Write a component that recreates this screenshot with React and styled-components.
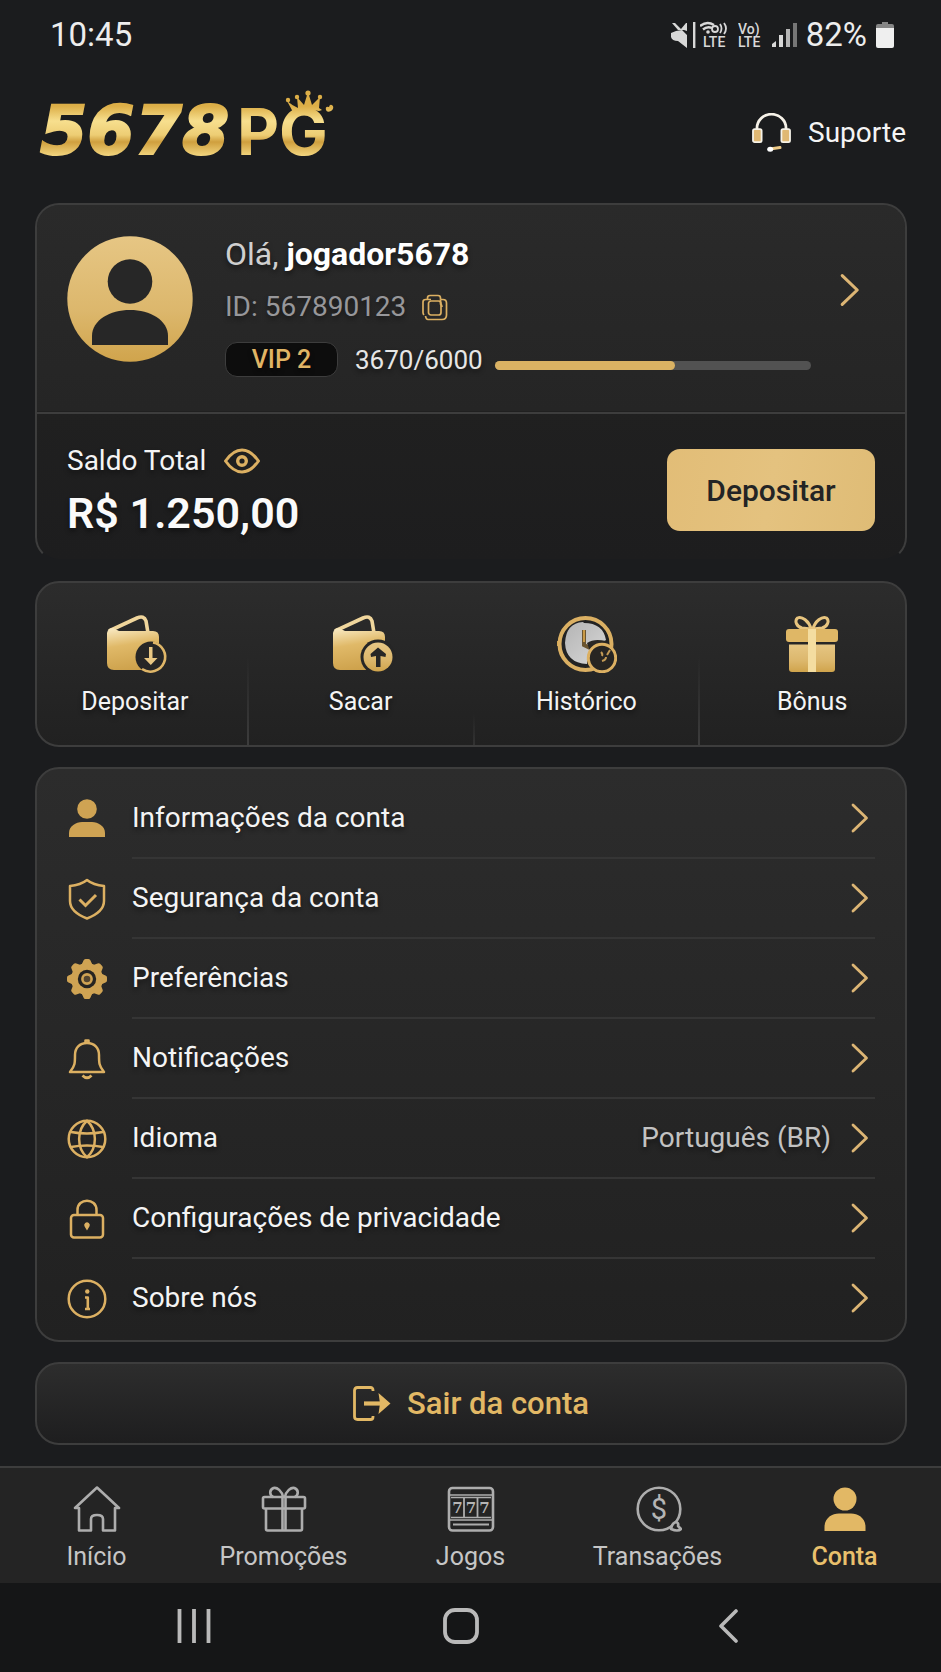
import React, { useState } from 'react';
import styled, { createGlobalStyle } from 'styled-components';

const GlobalStyle = createGlobalStyle`
  * {
    box-sizing: border-box;
  }
  body {
    margin: 0;
    background: #1b1c1e;
    color: #f4f4f4;
    font-family: Roboto, 'Liberation Sans', sans-serif;
  }
  button {
    font-family: inherit;
    color: inherit;
    cursor: pointer;
  }
  a {
    color: inherit;
    text-decoration: none;
  }
  svg {
    display: block;
    flex-shrink: 0;
  }
`;

const GOLD = '#dcb062';
const LINE = '#3d3d3d';

const Page = styled.div`
  display: flex;
  flex-direction: column;
  min-height: 100vh;
`;

const StatusBar = styled.div`
  display: flex;
  align-items: center;
  justify-content: space-between;
  height: 70px;
  padding: 0 47px 0 50px;
  font-size: 33px;
  line-height: 40px;
  color: #ededed;
`;

const StatusIcons = styled.div`
  display: flex;
  align-items: center;
  gap: 9px;
`;

const SoundIcons = styled.div`
  display: flex;
  align-items: center;
  gap: 4px;
`;

const Header = styled.header`
  display: flex;
  align-items: center;
  justify-content: space-between;
  padding: 18px 35px 25px 36px;
`;

const SupportLink = styled.a`
  display: flex;
  align-items: center;
  gap: 17px;
  font-size: 28px;
  line-height: 36px;
`;

const Main = styled.main`
  display: flex;
  flex-direction: column;
  gap: 20px;
  padding: 0 34px 21px 35px;
`;

const Card = styled.section`
  border: 2px solid ${LINE};
  border-radius: 24px;
  background: linear-gradient(#2c2c2c, #212121);
  text-shadow: 0 3px 5px rgba(0, 0, 0, 0.45);
  overflow: hidden;
`;

const AccountCard = styled(Card)`
  border-bottom-color: transparent;
  background: linear-gradient(#2a2a2a, #252525 206px, #202020 206px, #1d1d1e) padding-box;
`;

const Profile = styled.div`
  display: flex;
  align-items: flex-start;
  padding: 31px 30px 35px;
`;

const ProfileInfo = styled.div`
  flex: 1;
  display: flex;
  flex-direction: column;
  gap: 17px;
  margin-left: 32px;
`;

const Greeting = styled.div`
  font-size: 32px;
  line-height: 36px;
  color: #cfcfcf;

  strong {
    color: #fff;
  }
`;

const PlayerId = styled.div`
  display: flex;
  align-items: center;
  gap: 16px;
  font-size: 28px;
  line-height: 36px;
  color: #97979a;
`;

const IconButton = styled.button`
  padding: 0;
  border: 0;
  background: none;
`;

const VipRow = styled.div`
  display: flex;
  align-items: center;
  font-size: 25px;
  line-height: 34px;
`;

const VipBadge = styled.span`
  width: 113px;
  border: 1px solid ${LINE};
  border-radius: 12px;
  background: #0d0d0d;
  color: #e0b565;
  font-weight: 500;
  line-height: 33px;
  text-align: center;
`;

const VipPoints = styled.span`
  margin: 0 12px 0 17px;
  font-size: 26px;
  color: #e6e6e6;
`;

const Track = styled.div`
  flex: 1;
  align-self: flex-end;
  height: 9px;
  margin-bottom: 7px;
  border-radius: 5px;
  background: #525252;
`;

const Fill = styled.div`
  height: 100%;
  border-radius: 5px;
  background: #dab263;
`;

const ProfileLink = styled.a`
  display: flex;
  align-items: center;
  justify-content: center;
  width: 50px;
  height: 108px;
  margin-left: 14px;
`;

const Balance = styled.div`
  display: flex;
  align-items: center;
  justify-content: space-between;
  padding: 29px 30px 22px;
  border-top: 2px solid ${LINE};
`;

const BalanceText = styled.div`
  display: flex;
  flex-direction: column;
  gap: 10px;
`;

const BalanceLabel = styled.div`
  display: flex;
  align-items: center;
  gap: 18px;
  font-size: 28px;
  line-height: 36px;
`;

const Amount = styled.div`
  font-size: 43px;
  line-height: 48px;
  font-weight: 600;
  color: #fafafa;
`;

const DepositButton = styled.button`
  width: 208px;
  height: 82px;
  border: 0;
  border-radius: 13px;
  background: linear-gradient(100deg, #e2bd77, #e4c27f 50%, #dfbc76);
  color: #232425;
  font-size: 30px;
  font-weight: 500;
`;

// the columns run a little past the card, so the outer labels sit near its sides
const Actions = styled.div`
  display: grid;
  grid-template-columns: repeat(4, 1fr);
  margin: 0 -21px 0 -14px;
`;

const Action = styled.button`
  display: flex;
  flex-direction: column;
  align-items: center;
  gap: 14px;
  padding: 32px 0 28px;
  border: 0;
  border-right: 2px solid;
  border-image: linear-gradient(transparent 45%, ${LINE}) 1;
  background: none;
  font-size: 25px;
  line-height: 30px;
  text-shadow: inherit;

  &:nth-child(2) {
    border-image: linear-gradient(transparent 80%, #333) 1;
  }

  &:last-child {
    border-right-color: transparent;
    border-image: none;
  }
`;

const Menu = styled(Card)`
  display: flex;
  flex-direction: column;
  padding: 10px 30px 1px;
`;

const MenuRow = styled.a`
  display: flex;
  align-items: center;
  gap: 25px;
  height: 80px;
  font-size: 28px;
  line-height: 36px;
`;

const MenuBody = styled.span`
  flex: 1;
  align-self: stretch;
  display: flex;
  align-items: center;
  gap: 20px;
  padding-right: 6px;
  border-bottom: 2px solid #353535;

  ${MenuRow}:last-child & {
    border-bottom-color: transparent;
  }
`;

const MenuLabel = styled.span`
  flex: 1;
`;

const MenuValue = styled.span`
  color: #c2c2c2;
`;

const LogoutButton = styled.button`
  display: flex;
  align-items: center;
  justify-content: center;
  gap: 16px;
  height: 83px;
  border: 2px solid ${LINE};
  border-radius: 24px;
  background: linear-gradient(#2d2d2d, #1e1e1f);
  color: #e2b865;
  font-size: 31px;
  font-weight: 500;
`;

const TabBar = styled.nav`
  display: grid;
  grid-template-columns: repeat(5, 1fr);
  height: 117px;
  padding: 18px 3px 0;
  border-top: 2px solid ${LINE};
  background: #242424;
`;

const Tab = styled.a`
  display: flex;
  flex-direction: column;
  align-items: center;
  gap: 10px;
  font-size: 25px;
  line-height: 30px;
  font-weight: ${(props) => (props.$active ? 500 : 400)};
  color: ${(props) => (props.$active ? '#e9c06c' : '#c6c6c6')};
`;

const SystemBar = styled.div`
  flex: 1;
  display: grid;
  grid-template-columns: repeat(3, 1fr);
  place-items: center;
  min-height: 89px;
  padding: 0 80px 4px 61px;
  background: #151617;
`;

const HiddenSvg = styled.svg`
  position: absolute;
`;

const GoldDefs = () => (
  <HiddenSvg width="0" height="0" aria-hidden="true">
    <defs>
      <linearGradient id="gold" x1="0" y1="0" x2="0" y2="1">
        <stop offset="0" stopColor="#e6c684" />
        <stop offset="0.6" stopColor="#dcb76c" />
        <stop offset="1" stopColor="#d0a44c" />
      </linearGradient>
      <linearGradient id="wallet" x1="0.3" y1="0" x2="0.5" y2="1">
        <stop offset="0" stopColor="#f7e6bb" />
        <stop offset="0.4" stopColor="#e0b968" />
        <stop offset="1" stopColor="#cda14b" />
      </linearGradient>
      <linearGradient id="metal" gradientUnits="userSpaceOnUse" x1="0" y1="18" x2="0" y2="68">
        <stop offset="0" stopColor="#dcae47" />
        <stop offset="0.3" stopColor="#f7df8e" />
        <stop offset="0.58" stopColor="#edcd74" />
        <stop offset="0.72" stopColor="#cf9f3e" />
        <stop offset="1" stopColor="#f3d67f" />
      </linearGradient>
      <linearGradient id="silver" x1="0" y1="0" x2="1" y2="1">
        <stop offset="0" stopColor="#b4b4b4" />
        <stop offset="1" stopColor="#d8d8d8" />
      </linearGradient>
    </defs>
  </HiddenSvg>
);

const Logo = () => (
  <svg width="300" height="90" viewBox="0 0 300 90" role="img" aria-label="5678PG">
    <g fill="url(#metal)">
      <text
        x="4"
        y="66"
        fontFamily="'DejaVu Sans', sans-serif"
        fontSize="68"
        fontWeight="700"
        fontStyle="italic"
        stroke="url(#metal)"
        strokeWidth="2"
      >
        5678
      </text>
      <text x="201" y="67" fontFamily="Inter, sans-serif" fontSize="65" fontWeight="700">
        PG
      </text>
      <path d="M257 24 L251 13 Q257 18 262 20 L261 9 L268 17 L272 4 L276 17 L284 9 L283 20 L286 22 L283 23 Q270 20 257 24Z" />
      <circle cx="252" cy="12" r="2.2" />
      <circle cx="261" cy="9" r="2.2" />
      <circle cx="272" cy="5" r="2.6" />
      <circle cx="284" cy="9" r="2.2" />
      <path d="M290 22 Q289 18 293 19 Q294 15 297 18 Q298 21 295 23 Q291 25 290 22Z" />
    </g>
  </svg>
);

const Headset = () => (
  <svg width="39" height="40" viewBox="0 0 39 40" fill="none">
    <path d="M5 17 V15 A14.2 13.5 0 0 1 34 15 V17" stroke="#f6f2e8" strokeWidth="2.8" />
    <rect x="1" y="16.2" width="8.6" height="13" rx="1.6" fill="#e0b873" stroke="#f6f2e8" strokeWidth="1.8" />
    <rect x="29.4" y="16.2" width="8.6" height="13" rx="1.6" fill="#e0b873" stroke="#f6f2e8" strokeWidth="1.8" />
    <path d="M18 36 L28 34.6" stroke="#ecc987" strokeWidth="3" strokeLinecap="round" />
    <ellipse cx="18.2" cy="36.2" rx="3" ry="2.5" fill="#fff" />
  </svg>
);

const Mute = () => (
  <svg width="25" height="26" viewBox="0 0 25 26" fill="#d8d8d8">
    <path d="M0 11 L5 9 L11 8 L16 13 V26 L7 19 Q1 19 0 15Z" />
    <path d="M1 1 L4 1 L10 7 L15 1 H16 V9 L13 8 L7 8Z" />
    <rect x="22" y="0" width="2.4" height="26" />
  </svg>
);

const WifiLte = () => (
  <svg width="29" height="36" viewBox="0 -5 29 36" fill="none" stroke="#d8d8d8" strokeWidth="1.8">
    <path d="M0 4 Q7 -1.5 14 3 M3 7.5 Q7 4 12 6" strokeWidth="2.4" />
    <circle cx="15" cy="7" r="3" />
    <path d="M20 2 Q23 6.5 20 11 M24 1 Q28 6.5 24 12" />
    <circle cx="8" cy="10" r="1.8" fill="#d8d8d8" stroke="none" />
    <text x="3" y="25" fontSize="14" fontWeight="500" fill="#d8d8d8" stroke="none">
      LTE
    </text>
  </svg>
);

const VoLte = () => (
  <svg width="25" height="36" viewBox="0 -5 25 36" fill="#d8d8d8" fontSize="14" fontWeight="500">
    <text x="0" y="12">
      Vo)
    </text>
    <text x="0" y="25">
      LTE
    </text>
  </svg>
);

const Signal = () => (
  <svg width="25" height="26" viewBox="0 0 25 26" fill="#d8d8d8">
    <path d="M0 25 V22 L4 19 V25Z" />
    <rect x="7" y="13" width="4" height="12" />
    <rect x="14" y="7" width="4" height="18" fill="#b5b5b5" />
    <rect x="21" y="1" width="4" height="24" fill="#767676" />
  </svg>
);

const Battery = () => (
  <svg width="18" height="26" viewBox="0 0 18 26">
    <path d="M6 0 H12 V2 H16 Q18 2 18 4 V7 H0 V4 Q0 2 2 2 H6Z" fill="#858585" />
    <path d="M0 6 H18 V24 Q18 26 16 26 H2 Q0 26 0 24Z" fill="#efefef" />
  </svg>
);

const Avatar = () => (
  <svg width="126" height="126" viewBox="0 0 126 126" role="img" aria-label="Avatar">
    <circle cx="63" cy="63" r="62.7" fill="url(#gold)" />
    <circle cx="63" cy="45.5" r="22.3" fill="#272727" />
    <path d="M25 109 V100 C25 84 43 74 63 74 C83 74 101 84 101 100 V109Z" fill="#272727" />
  </svg>
);

const Copy = () => (
  <svg width="26" height="27" viewBox="0 0 26 27" fill="none" stroke={GOLD} strokeWidth="1.7">
    <path d="M5.5 5.5 V4 Q5.5 1.5 8 1.5 H16 Q18.5 1.5 18.5 4 V5.5" />
    <path d="M2 21 Q1 20 1 18.5 V8 Q1 5.5 3.5 5.5 H9 M18.5 5.5 H21 Q24.5 5.5 24.5 9 V21 Q24.5 25.5 20 25.5 H6 Q4 25.5 3.5 22" />
    <rect x="6.5" y="7" width="12.5" height="14" rx="2.5" />
    <path d="M18.5 5.5 V10 Q20 11 20 13" />
  </svg>
);

const Eye = () => (
  <svg width="36" height="26" viewBox="0 0 36 26" fill="none" stroke={GOLD}>
    <path
      d="M1.5 13 C5 8 11 2 18 2 C25 2 31 8 34.5 13 C31 18 25 24 18 24 C11 24 5 18 1.5 13Z"
      strokeWidth="3"
      strokeLinejoin="round"
    />
    <circle cx="18" cy="13" r="4.3" strokeWidth="3.4" />
  </svg>
);

const Chevron = ({ size = 30 }) => (
  <svg
    width={Math.round(size * 0.6)}
    height={size}
    viewBox="0 0 18 30"
    fill="none"
    stroke="#dcb574"
    strokeWidth="2.8"
    strokeLinecap="round"
    strokeLinejoin="round"
  >
    <path d="M2 2 L15.5 15 L2 28" />
  </svg>
);

const Wallet = () => (
  <>
    <path d="M2 16 L30 3 Q37 0 39 6 L41 18" fill="none" stroke="#f0d69c" strokeWidth="3.6" />
    <path d="M0 18 Q1 13 6 13 L12 16 H46 Q52 16 52 22 V48 Q52 55 45 55 H7 Q0 55 0 48Z" fill="url(#wallet)" />
  </>
);

const DepositIcon = () => (
  <svg width="60" height="58" viewBox="-2 0 60 58" overflow="visible">
    <Wallet />
    <circle cx="44" cy="42" r="15.5" fill="#262626" />
    <path d="M46 27.5 A14.7 14.7 0 1 1 35 54" fill="none" stroke="#dfb668" strokeWidth="2.6" />
    <path d="M42 32 H45.5 V43 H50.5 L43.8 50 L37 43 H42Z" fill="#e8c783" />
  </svg>
);

const WithdrawIcon = () => (
  <svg width="60" height="58" viewBox="-2 0 60 58" overflow="visible">
    <Wallet />
    <circle cx="45" cy="42" r="17.5" fill="#262626" />
    <circle cx="45" cy="42" r="14.5" fill="url(#gold)" />
    <path d="M43 52 V41 L38 42 L37.500 39 L45 32.5 L53 39 L52.5 42 L47.5 41 V52Z" fill="#262626" />
  </svg>
);

const HistoryIcon = () => (
  <svg width="61" height="58" viewBox="0 0 61 58" fill="none">
    <path d="M5 26 H1 V31 H5Z" fill="#d6a851" />
    <circle cx="29.5" cy="29" r="26" stroke="#dbb063" strokeWidth="4" fill="#232323" />
    <path d="M27 7 Q10 8 9 28 Q10 48 31 49 Q30 38 37 33 Q45 28 50 25 Q47 8 28 8Z" fill="url(#silver)" />
    <path d="M28 15 V30 L34 33" stroke="#6b5530" strokeWidth="4" />
    <path d="M28 15 V27" stroke="#c99a47" strokeWidth="2" />
    <path d="M31 28 Q38 23 50 26 L48 36 H34Z" fill="#292724" />
    <circle cx="46" cy="43" r="13.7" fill="#272522" stroke="#dcb062" strokeWidth="3" />
    <path d="M45 37 Q47 39 46 41 M46 46 Q50 45 50 42 M51 40 L54 35" stroke="#c39a55" strokeWidth="2" />
  </svg>
);

const BonusIcon = () => (
  <svg width="54" height="58" viewBox="0 0 54 58">
    <g fill="none" stroke="#e8c57f" strokeWidth="3">
      <path d="M26 14 C24 6 17 1 12.5 3 C9 6 12 12 17 13Z" />
      <path d="M28 14 C30 6 37 1 41.5 3 C45 6 42 12 37 13Z" />
    </g>
    <rect x="1" y="14" width="52" height="13" rx="3" fill="#dfb766" />
    <path d="M4 29 H50 V54 Q50 57 47 57 H7 Q4 57 4 54Z" fill="url(#gold)" />
    <rect x="4" y="27" width="46" height="2.5" fill="#262626" />
    <rect x="23" y="14" width="8" height="43" fill="#f4dda0" />
  </svg>
);

const MenuIcon = ({ children, ...rest }) => (
  <svg
    width="40"
    height="42"
    viewBox="0 0 40 42"
    fill="none"
    stroke={GOLD}
    strokeWidth="2.5"
    strokeLinejoin="round"
    {...rest}
  >
    {children}
  </svg>
);

const Person = () => (
  <MenuIcon stroke="none" fill="#cfa353">
    <circle cx="20" cy="11" r="9.8" />
    <path d="M2 39 V35 C2 28 9 24 15 24 H25 C31 24 38 28 38 35 V39Z" />
  </MenuIcon>
);

const Shield = () => (
  <MenuIcon>
    <path d="M20 2 C15 6 9 7.5 3 8 V23 C3 31 11 37 20 40.5 C29 37 37 31 37 23 V8 C31 7.5 25 6 20 2Z" />
    <path d="M12.5 21.5 L18.5 27.5 L29 17" strokeWidth="3" strokeLinejoin="miter" />
  </MenuIcon>
);

const Gear = () => (
  <MenuIcon stroke="none">
    <g fill="#cfa353">
      <circle cx="20" cy="21" r="16" />
      {[0, 45, 90, 135, 180, 225, 270, 315].map((angle) => (
        <path
          key={angle}
          d="M14 8 L16.5 2.5 Q17 1 18.5 1 H21.5 Q23 1 23.5 2.5 L26 8Z"
          transform={`rotate(${angle} 20 21)`}
        />
      ))}
    </g>
    <circle cx="20" cy="21" r="9.2" fill="#262421" />
    <circle cx="20" cy="21" r="4.6" fill="#54452f" stroke="#cfa353" strokeWidth="2.6" />
  </MenuIcon>
);

const Bell = () => (
  <MenuIcon>
    <path d="M20 5 C12.5 5 8 10 8 17 C8 25 8 28 3 34 H37 C32 28 32 25 32 17 C32 10 27.5 5 20 5Z" />
    <path d="M18.5 4.5 V2.5 H21.5 V4.5" strokeWidth="2.6" />
    <path d="M15.5 37.5 Q20 42 24.5 37.5" strokeWidth="2.8" />
  </MenuIcon>
);

const Globe = () => (
  <MenuIcon>
    <circle cx="20" cy="21" r="18.3" />
    <path d="M20 2.7 C9.5 12 9.5 30 20 39.3 C30.5 30 30.5 12 20 2.7Z" />
    <path d="M4 14 Q20 17 36 14 M4 29 Q20 26 36 29" />
  </MenuIcon>
);

const Lock = () => (
  <MenuIcon>
    <path d="M10.5 17 V12 C10.5 -0.5 29.5 -0.5 29.5 12 V17" />
    <rect x="4" y="17" width="32" height="22.5" rx="3" />
    <path d="M20 32.5 L17.6 28.5 A2.8 2.8 0 1 1 22.4 28.5Z" fill={GOLD} stroke="none" />
  </MenuIcon>
);

const Info = () => (
  <MenuIcon>
    <circle cx="20" cy="21" r="18.3" />
    <circle cx="20.3" cy="13.5" r="2.2" fill={GOLD} stroke="none" />
    <path d="M18 19.5 H20.8 V31 M18 31 H23" strokeWidth="2.6" />
  </MenuIcon>
);

const Logout = () => (
  <svg width="38" height="35" viewBox="0 0 38 35" fill="none" stroke="#e2b865" strokeWidth="2.8">
    <path d="M20 5 V4 Q20 1.5 17.5 1.5 H4.5 Q1.5 1.5 1.5 4.5 V30.5 Q1.5 33.5 4.5 33.5 H17.5 Q20 33.5 20 31 V30" />
    <path d="M11 17.5 H28" strokeWidth="4.2" />
    <path d="M25.5 7 L37.5 17.5 L25.5 28 L27 17.5Z" fill="#e2b865" stroke="none" />
  </svg>
);

const TabIcon = ({ children, ...rest }) => (
  <svg
    width="48"
    height="46"
    viewBox="0 0 48 46"
    fill="none"
    stroke="#adadad"
    strokeWidth="2.6"
    strokeLinejoin="round"
    {...rest}
  >
    {children}
  </svg>
);

const Home = () => (
  <TabIcon>
    <path d="M6 22 H2 L24 1.5 L46 22 H42 V44.5 H30 V33 Q30 29 24 29 Q18 29 18 33 V44.5 H6Z" />
  </TabIcon>
);

const GiftOutline = () => (
  <TabIcon>
    <path d="M23 11 C22 5 17 1 13.5 2 C9 4 9.5 9 13 11 M25 11 C26 5 31 1 34.5 2 C39 4 38.5 9 35 11" />
    <rect x="3" y="11" width="42" height="11.5" rx="1.5" />
    <path d="M6 22.5 V43 Q6 44.5 7.5 44.5 H40.5 Q42 44.5 42 43 V22.5 M22.5 11 V44.5 M25.5 11 V44.5" />
  </TabIcon>
);

const Slots = () => (
  <TabIcon>
    <rect x="2" y="2" width="44" height="42.5" rx="3.5" />
    <path d="M2 9 H46 M4 11.5 H44 M4 31.5 H44 M2 34 H46" strokeWidth="1.6" />
    <path d="M17 11 V31 M30.5 11 V31" strokeWidth="1.8" />
    <path d="M6 38.5 H42" strokeWidth="2.2" />
    <g
      fill="#b5b5b5"
      stroke="none"
      fontFamily="'DejaVu Serif', serif"
      fontWeight="700"
      fontSize="15"
      textAnchor="middle"
    >
      <text x="10.5" y="27">7</text>
      <text x="24" y="27">7</text>
      <text x="37.5" y="27">7</text>
    </g>
  </TabIcon>
);

const Coin = () => (
  <TabIcon>
    <circle cx="25" cy="23" r="21.3" />
    <path d="M37 43 Q38 37 42 36 Q45 37 44 40 L47 43 Q44 46 37 43Z" fill="#242424" />
    <text x="25" y="33" fill="#b5b5b5" stroke="none" fontSize="29" textAnchor="middle">
      $
    </text>
  </TabIcon>
);

const Account = () => (
  <TabIcon stroke="none" fill="#e2b865">
    <circle cx="24" cy="13" r="11.5" />
    <path d="M3.5 45 V41 C3.5 32 11 27.5 18 27.5 H30 C37 27.5 44.5 32 44.5 41 V45Z" />
  </TabIcon>
);

const actions = [
  { label: 'Depositar', icon: <DepositIcon /> },
  { label: 'Sacar', icon: <WithdrawIcon /> },
  { label: 'Histórico', icon: <HistoryIcon /> },
  { label: 'Bônus', icon: <BonusIcon /> },
];

const menu = [
  { label: 'Informações da conta', icon: <Person /> },
  { label: 'Segurança da conta', icon: <Shield /> },
  { label: 'Preferências', icon: <Gear /> },
  { label: 'Notificações', icon: <Bell /> },
  { label: 'Idioma', icon: <Globe />, value: 'Português (BR)' },
  { label: 'Configurações de privacidade', icon: <Lock /> },
  { label: 'Sobre nós', icon: <Info /> },
];

const tabs = [
  { label: 'Início', icon: <Home /> },
  { label: 'Promoções', icon: <GiftOutline /> },
  { label: 'Jogos', icon: <Slots /> },
  { label: 'Transações', icon: <Coin /> },
  { label: 'Conta', icon: <Account /> },
];

function App() {
  const [showBalance, setShowBalance] = useState(true);
  const [tab, setTab] = useState('Conta');
  const vipProgress = 57;

  return (
    <Page>
      <GlobalStyle />
      <GoldDefs />
      <StatusBar>
        <span>10:45</span>
        <StatusIcons>
          <SoundIcons>
            <Mute />
            <WifiLte />
          </SoundIcons>
          <VoLte />
          <Signal />
          <span>82%</span>
          <Battery />
        </StatusIcons>
      </StatusBar>

      <Header>
        <Logo />
        <SupportLink href="#suporte">
          <Headset />
          Suporte
        </SupportLink>
      </Header>

      <Main>
        <AccountCard>
          <Profile>
            <Avatar />
            <ProfileInfo>
              <Greeting>
                Olá, <strong>jogador5678</strong>
              </Greeting>
              <PlayerId>
                ID: 567890123
                <IconButton aria-label="Copiar ID">
                  <Copy />
                </IconButton>
              </PlayerId>
              <VipRow>
                <VipBadge>VIP 2</VipBadge>
                <VipPoints>3670/6000</VipPoints>
                <Track>
                  <Fill style={{ width: `${vipProgress}%` }} />
                </Track>
              </VipRow>
            </ProfileInfo>
            <ProfileLink href="#perfil" aria-label="Perfil">
              <Chevron size={34} />
            </ProfileLink>
          </Profile>
          <Balance>
            <BalanceText>
              <BalanceLabel>
                Saldo Total
                <IconButton aria-label="Mostrar saldo" onClick={() => setShowBalance(!showBalance)}>
                  <Eye />
                </IconButton>
              </BalanceLabel>
              <Amount>{showBalance ? 'R$ 1.250,00' : 'R$ ••••'}</Amount>
            </BalanceText>
            <DepositButton>Depositar</DepositButton>
          </Balance>
        </AccountCard>

        <Card>
          <Actions>
            {actions.map(({ label, icon }) => (
              <Action key={label}>
                {icon}
                {label}
              </Action>
            ))}
          </Actions>
        </Card>

        <Menu>
          {menu.map(({ label, icon, value }) => (
            <MenuRow key={label} href="#conta">
              {icon}
              <MenuBody>
                <MenuLabel>{label}</MenuLabel>
                {value && <MenuValue>{value}</MenuValue>}
                <Chevron />
              </MenuBody>
            </MenuRow>
          ))}
        </Menu>

        <LogoutButton>
          <Logout />
          Sair da conta
        </LogoutButton>
      </Main>

      <TabBar>
        {tabs.map(({ label, icon }) => (
          <Tab key={label} href="#conta" $active={tab === label} onClick={() => setTab(label)}>
            {icon}
            {label}
          </Tab>
        ))}
      </TabBar>

      <SystemBar>
        <IconButton aria-label="Recentes">
          <svg width="34" height="34" viewBox="0 0 34 34" stroke="#b9b9b9" strokeWidth="3.8">
            <path d="M2.5 0 V34 M17 0 V34 M31.5 0 V34" />
          </svg>
        </IconButton>
        <IconButton aria-label="Tela inicial">
          <svg width="36" height="36" viewBox="0 0 36 36" fill="none" stroke="#b9b9b9" strokeWidth="3.8">
            <rect x="2" y="2" width="32" height="32" rx="10" />
          </svg>
        </IconButton>
        <IconButton aria-label="Voltar">
          <svg width="20" height="34" viewBox="0 0 20 34" fill="none" stroke="#b9b9b9" strokeWidth="3.6">
            <path d="M18 2 L3 17 L18 32" strokeLinecap="round" strokeLinejoin="round" />
          </svg>
        </IconButton>
      </SystemBar>
    </Page>
  );
}

export default App;
